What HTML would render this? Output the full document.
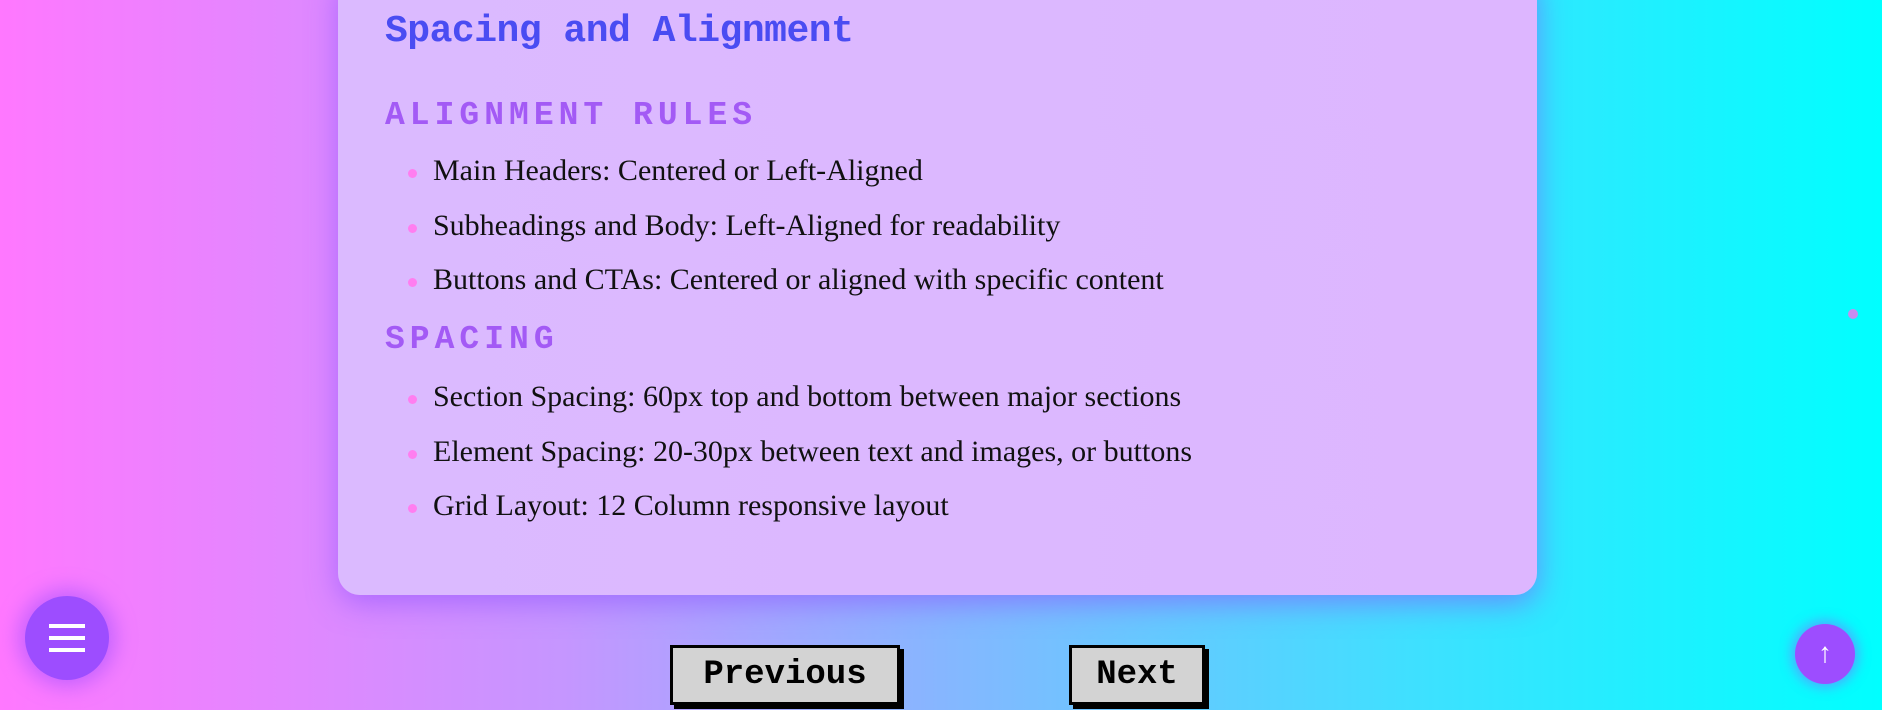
<!DOCTYPE html>
<html><head><style>
html,body{margin:0;padding:0;}
body{width:1882px;height:710px;overflow:hidden;position:relative;background:linear-gradient(90deg,#ff78ff 0%,#c596ff 30%,#86b6ff 50%,#3fe0ff 75%,#00ffff 100%);font-family:"Liberation Serif",serif;}
.card{position:absolute;left:338px;top:-30px;width:1199px;height:625px;border-radius:22px;background:linear-gradient(90deg,#dbbaff,#ddb6ff);box-shadow:0 8px 30px rgba(140,80,255,0.6);}
h1{position:absolute;left:385px;top:10px;margin:0;font:bold 38px "Liberation Mono",monospace;color:#4a4cf2;letter-spacing:-0.5px;}
h2{position:absolute;left:385px;margin:0;font:bold 33px "Liberation Mono",monospace;color:#a35af5;letter-spacing:5px;}
.li{position:absolute;left:433px;font-size:30px;color:#111;white-space:nowrap;}
.li:before{content:"";position:absolute;left:-25px;top:15px;width:9px;height:9px;border-radius:50%;background:#ff7ef0;}
.btn{position:absolute;top:645px;height:60px;background:#d3d3d3;border:3px solid #000;box-shadow:4px 4px 0 #000;font:bold 34px "Liberation Mono",monospace;color:#000;display:flex;align-items:center;justify-content:center;box-sizing:border-box;}
</style></head><body>
<div class="card"></div>
<h1>Spacing and Alignment</h1>
<h2 style="top:97px">ALIGNMENT RULES</h2>
<div class="li" style="top:154px">Main Headers: Centered or Left-Aligned</div>
<div class="li" style="top:209px">Subheadings and Body: Left-Aligned for readability</div>
<div class="li" style="top:263px">Buttons and CTAs: Centered or aligned with specific content</div>
<h2 style="top:321px">SPACING</h2>
<div class="li" style="top:380px">Section Spacing: 60px top and bottom between major sections</div>
<div class="li" style="top:435px">Element Spacing: 20-30px between text and images, or buttons</div>
<div class="li" style="top:489px">Grid Layout: 12 Column responsive layout</div>
<div class="btn" style="left:670px;width:230px">Previous</div>
<div class="btn" style="left:1069px;width:136px">Next</div>
<div style="position:absolute;left:25px;top:596px;width:84px;height:84px;border-radius:50%;background:#9d4dff;box-shadow:0 0 20px 6px rgba(160,80,255,0.6);">
 <div style="position:absolute;left:24px;top:28px;width:36px;height:4px;background:#fff"></div>
 <div style="position:absolute;left:24px;top:40px;width:36px;height:4px;background:#fff"></div>
 <div style="position:absolute;left:24px;top:52px;width:36px;height:4px;background:#fff"></div>
</div>
<div style="position:absolute;left:1795px;top:624px;width:60px;height:60px;border-radius:50%;background:#9d4dff;box-shadow:0 0 12px 3px rgba(160,80,255,0.5);color:#fff;font:28px 'Liberation Sans',sans-serif;text-align:center;line-height:58px;">↑</div>
<div style="position:absolute;left:1848px;top:309px;width:10px;height:10px;border-radius:50%;background:#c78cf0;"></div>
</body></html>
